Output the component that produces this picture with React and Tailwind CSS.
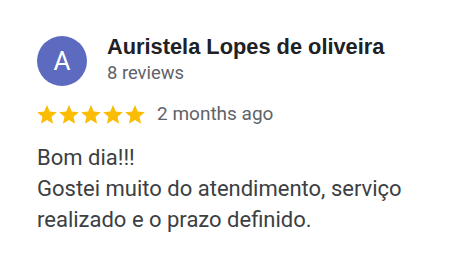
import React from "react";

function Star() {
  return (
    <svg width="20" height="19" viewBox="2 2 20 19.27" className="block">
      <path
        fill="#fbbc04"
        d="M12 17.27L18.18 21l-1.64-7.03L22 9.24l-7.19-.61L12 2 9.19 8.63 2 9.24l5.46 4.73L5.82 21z"
      />
    </svg>
  );
}

export default function App() {
  return (
    <div className="w-[461px] h-[253px] bg-white pl-[37px] pt-[36px]">
      <div className="flex items-start">
        <div className="w-[50px] h-[50px] rounded-full bg-[#5c6bc0] flex items-center justify-center text-white text-[26px] font-['Roboto',sans-serif]">
          A
        </div>
        <div className="ml-[20px] mt-[-1px]">
          <div className="font-['Liberation_Sans',Arial,sans-serif] font-bold text-[21.8px] leading-[24px] text-[#202124]">
            Auristela Lopes de oliveira
          </div>
          <div className="mt-[2px] font-['Roboto',sans-serif] text-[18.4px] leading-[24px] text-[#5f6368]">
            8 reviews
          </div>
        </div>
      </div>
      <div className="flex items-center mt-[17px]">
        <div className="flex gap-[2px]">
          <Star />
          <Star />
          <Star />
          <Star />
          <Star />
        </div>
        <span className="ml-[12px] font-['Roboto',sans-serif] text-[19px] leading-[22px] text-[#5f6368]">2 months ago</span>
      </div>
      <div className="mt-[17px] font-['Roboto',sans-serif] text-[22px] leading-[31px] text-[#3c4043]">
        <div>Bom dia!!!</div>
        <div>Gostei muito do atendimento, serviço</div>
        <div>realizado e o prazo definido.</div>
      </div>
    </div>
  );
}
